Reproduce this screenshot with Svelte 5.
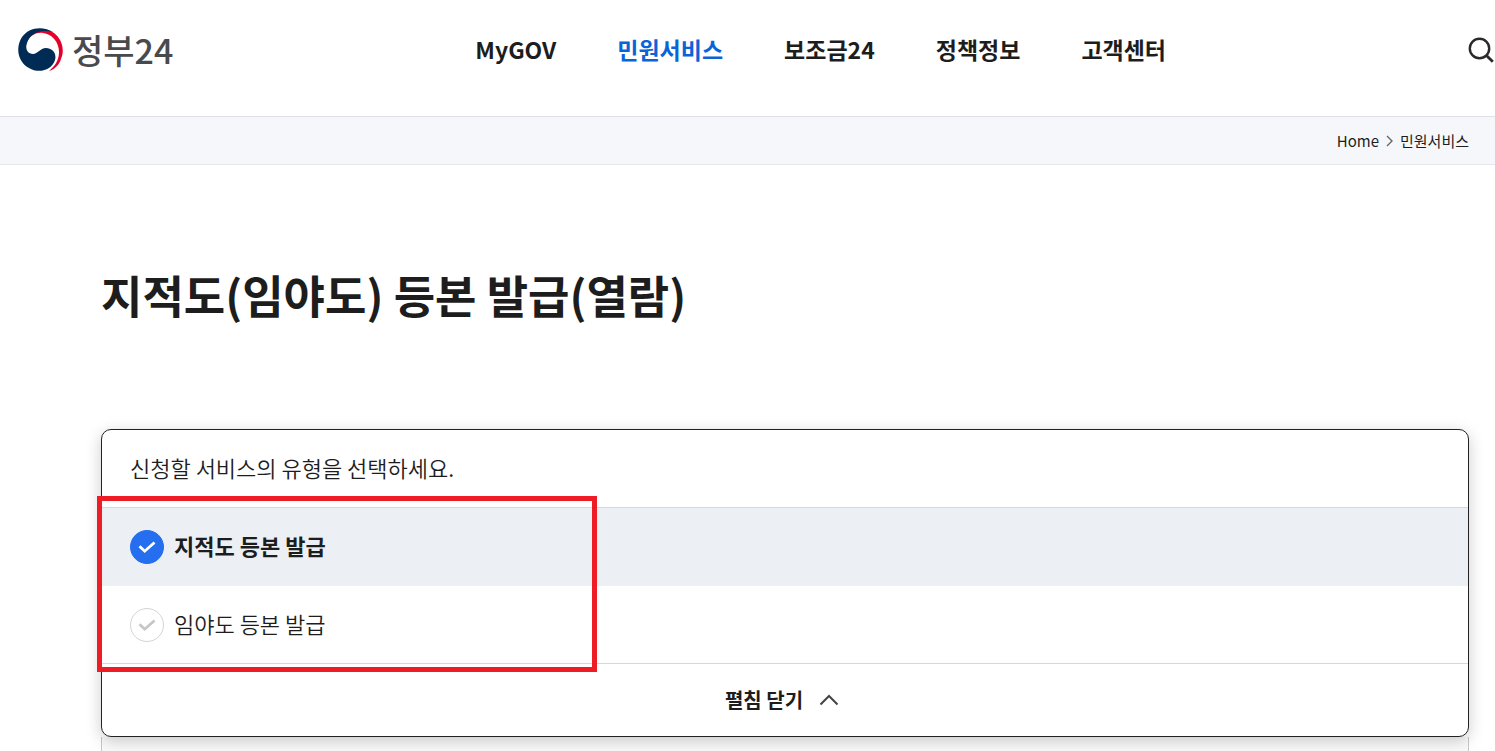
<script>
  const menus = [
    { label: 'MyGOV' },
    { label: '민원서비스', active: true },
    { label: '보조금24' },
    { label: '정책정보' },
    { label: '고객센터' }
  ]

  const services = [
    { id: 'land', label: '지적도 등본 발급' },
    { id: 'forest', label: '임야도 등본 발급' }
  ]

  let selected = $state('land')
  let expanded = $state(true)

  function toggle() {
    expanded = !expanded
  }
</script>

<div class="page">
  <header class="header">
    <a class="logo" href="#home">
      <svg width="46" height="44" viewBox="0 0 46 44" aria-hidden="true">
        <path d="M10 6C17 0 28 -1 36 5C44 11 47 22 43 31C41 37 37 41 31 43C37 38 41 32 41 24C41 14 34 6 25 5C17 4 10 9 8 17C7 13 8 9 10 6Z" fill="#e4002b" />
        <path d="M35 4C24 -3 10 0 4 9C-3 20 0 34 11 40C21 46 34 42 37 32C39 25 34 20 28 20C22 20 20 26 15 26C9 26 7 20 9 15C12 5 23 1 35 4Z" fill="#002b55" />
      </svg>
      <span>정부24</span>
    </a>
    <nav class="menu">
      {#each menus as menu}
        <a href="#menu" class:active={menu.active}>{menu.label}</a>
      {/each}
    </nav>
    <button class="btn-search" aria-label="검색">
      <svg width="26" height="26" viewBox="0 0 26 26" fill="none" stroke="#2a2a2a" stroke-width="2.4">
        <circle cx="11.5" cy="11.5" r="9.7" />
        <path d="M18.5 18.5l6.3 6.3" stroke-width="2.8" />
      </svg>
    </button>
  </header>

  <nav class="breadcrumb">
    <a href="#home">Home</a>
    <svg width="7" height="12" viewBox="0 0 7 12" fill="none">
      <path d="M1 1l5 5-5 5" stroke="#666" stroke-width="1.4" />
    </svg>
    <a href="#service">민원서비스</a>
  </nav>

  <main>
    <h1>지적도(임야도) 등본 발급(열람)</h1>

    <section class="card">
      <p class="guide">신청할 서비스의 유형을 선택하세요.</p>
      {#if expanded}
        <div class="options">
          {#each services as service}
            <label class="option" class:selected={selected === service.id}>
              <span class="check">
                <input type="radio" name="service" value={service.id} bind:group={selected} />
                <svg width="18" height="14" viewBox="0 0 18 14" fill="none">
                  <path d="M1.5 6.3l5.2 4.9L16.5 2.5" stroke="currentColor" stroke-width="2.8" />
                </svg>
              </span>
              <span class="option-name">{service.label}</span>
            </label>
          {/each}
          <div class="marker"></div>
        </div>
      {/if}
      <button class="btn-toggle" onclick={toggle}>
        <span>펼침 닫기</span>
        <svg width="20" height="12" viewBox="0 0 20 12" fill="none">
          <path d="M1.5 10.5L10 2l8.5 8.5" stroke="#444" stroke-width="2" />
        </svg>
      </button>
    </section>
    <div class="panel"></div>
  </main>
</div>

<style>
  :global(body) {
    margin: 0;
    background: #fff;
  }

  .page {
    display: flex;
    flex-direction: column;
    min-height: 100vh;
    color: #1d1d1d;
    font-family: "Noto Sans CJK KR", "Noto Sans", sans-serif;
  }

  a {
    color: inherit;
    text-decoration: none;
  }

  button {
    padding: 0;
    border: none;
    background: none;
    color: inherit;
    font-family: inherit;
    cursor: pointer;
  }

  svg {
    display: block;
    flex-shrink: 0;
  }

  .header {
    display: flex;
    align-items: center;
    justify-content: space-between;
    padding: 24px 1px 40px 18px;
  }

  .logo {
    display: flex;
    align-items: center;
    gap: 8px;
    font-size: 34px;
    font-weight: 500;
    line-height: 52px;
    color: #4a4a4c;
  }

  .menu {
    display: flex;
    gap: 61px;
    padding-bottom: 2px;
    font-size: 23px;
    font-weight: 700;
    line-height: 36px;
  }

  .menu .active {
    color: #0b63d8;
  }

  .breadcrumb {
    display: flex;
    align-items: center;
    justify-content: flex-end;
    gap: 7px;
    padding: 12px 26px;
    border-top: 1px solid #dfe1e6;
    border-bottom: 1px solid #e6e8ec;
    background: #f5f7fb;
    font-size: 15px;
    line-height: 23px;
  }

  main {
    display: flex;
    flex: 1;
    flex-direction: column;
    padding: 94px 26px 0 101px;
  }

  h1 {
    margin: 0 0 98px;
    font-size: 45px;
    font-weight: 700;
    line-height: 72px;
  }

  .card {
    position: relative;
    border: 1px solid #222;
    border-radius: 10px;
    background: #fff;
    box-shadow: 0 4px 16px rgba(0, 0, 0, 0.2);
  }

  .guide {
    margin: 0;
    padding: 21px 28px 23px;
    font-size: 22px;
    font-weight: 350;
    line-height: 33px;
  }

  .options {
    position: relative;
    border-top: 1px solid #d6d8db;
    border-bottom: 1px solid #d6d8db;
  }

  .option {
    display: flex;
    align-items: center;
    gap: 10px;
    padding: 22px 28px;
    font-size: 22px;
    font-weight: 350;
    line-height: 30px;
    cursor: pointer;
  }

  .option + .option {
    padding-bottom: 21px;
  }

  .option.selected {
    background: #ecf0f5;
    font-weight: 700;
  }

  .option-name {
    padding-bottom: 4px;
  }

  .check {
    display: grid;
    place-items: center;
    color: #c6c6c6;
  }

  .check > * {
    grid-area: 1 / 1;
  }

  .check input {
    width: 34px;
    height: 34px;
    margin: 0;
    border: 1px solid #d4d4d4;
    border-radius: 50%;
    background: #fff;
    appearance: none;
    cursor: pointer;
  }

  .check svg {
    z-index: 1;
    pointer-events: none;
  }

  .selected .check {
    color: #fff;
  }

  .selected input {
    border-color: #256ef0;
    background: #256ef0;
  }

  /* highlight frame drawn over the options */
  .marker {
    position: absolute;
    top: -12px;
    left: -5px;
    box-sizing: border-box;
    width: 500px;
    height: 176px;
    border: 5px solid #ee1c25;
    pointer-events: none;
  }

  .btn-toggle {
    display: flex;
    align-items: center;
    justify-content: center;
    gap: 16px;
    width: 100%;
    padding: 20px 6px 20px 0;
    font-size: 20px;
    font-weight: 700;
    line-height: 32px;
  }

  .panel {
    flex: 1;
    border: 1px solid #c8c8c8;
    border-width: 0 1px;
    background: #fafafa;
  }
</style>
